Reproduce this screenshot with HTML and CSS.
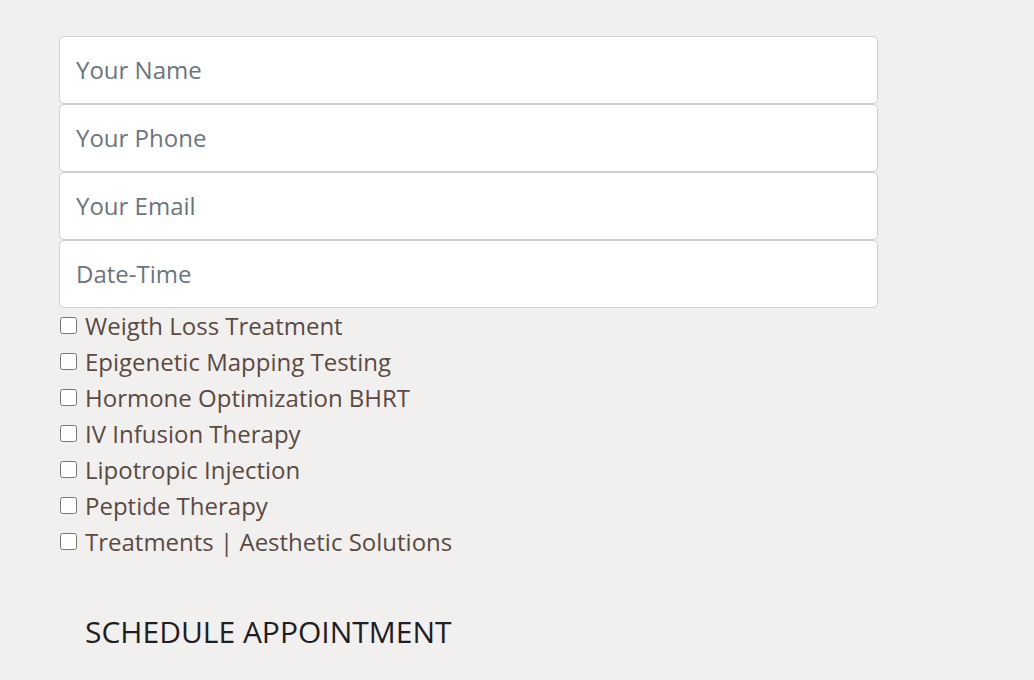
FILE: index.html
```html
<!DOCTYPE html>
<html>
<head>
<meta charset="utf-8">
<link rel="stylesheet" href="styles.css">
</head>
<body>
<form class="form">
  <input class="field" type="text" placeholder="Your Name">
  <input class="field" type="text" placeholder="Your Phone">
  <input class="field" type="text" placeholder="Your Email">
  <input class="field" type="text" placeholder="Date-Time">
  <div class="options">
    <label class="option"><input type="checkbox" class="check"><span>Weigth Loss Treatment</span></label>
    <label class="option"><input type="checkbox" class="check"><span>Epigenetic Mapping Testing</span></label>
    <label class="option"><input type="checkbox" class="check"><span>Hormone Optimization BHRT</span></label>
    <label class="option"><input type="checkbox" class="check"><span>IV Infusion Therapy</span></label>
    <label class="option"><input type="checkbox" class="check"><span>Lipotropic Injection</span></label>
    <label class="option"><input type="checkbox" class="check"><span>Peptide Therapy</span></label>
    <label class="option"><input type="checkbox" class="check"><span>Treatments | Aesthetic Solutions</span></label>
  </div>
  <button type="button" class="submit">SCHEDULE APPOINTMENT</button>
</form>
</body>
</html>
```
FILE: styles.css
```css
html, body {
  margin: 0;
  padding: 0;
  background: #f1f0ee;
}
body {
  font-family: "Open Sans", "Liberation Sans", sans-serif;
}
.form {
  display: flex;
  flex-direction: column;
  width: 819px;
  padding: 36px 0 0 59px;
}
.field {
  box-sizing: border-box;
  height: 68px;
  width: 100%;
  border: 1px solid #cfcfcf;
  border-radius: 5px;
  background: #fff;
  padding: 0 16px 2px;
  font-family: inherit;
  font-size: 24px;
  color: #495057;
  outline: none;
}
.field::placeholder {
  color: #6c757d;
}
.options {
  display: flex;
  flex-direction: column;
}
.option {
  box-sizing: border-box;
  display: flex;
  align-items: center;
  height: 36px;
  padding-bottom: 2px;
  font-size: 24px;
  color: #5b4a43;
}
.check {
  width: 17px;
  height: 17px;
  margin: 0 8px 0 1px;
}
.submit {
  align-self: flex-start;
  margin-top: 49px;
  padding: 0 26px;
  height: 44px;
  border: none;
  background: transparent;
  font-family: inherit;
  font-size: 30px;
  color: #1e1e24;
  cursor: pointer;
}
```
